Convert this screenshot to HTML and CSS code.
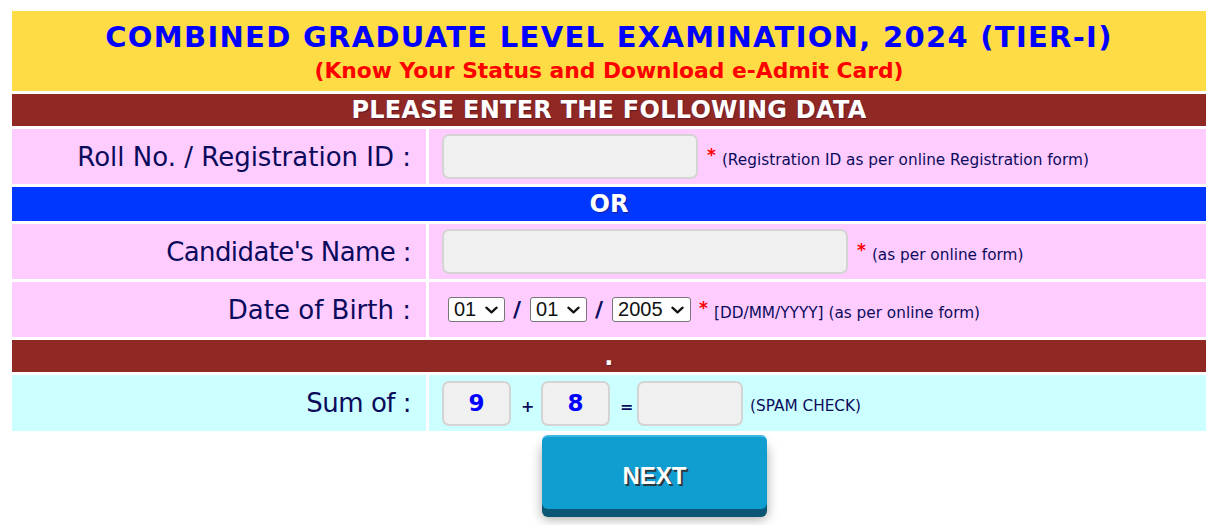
FILE: index.html
```html
<!DOCTYPE html>
<html lang="en">
<head>
<meta charset="utf-8">
<title>Combined Graduate Level Examination, 2024 (Tier-I)</title>
<link rel="stylesheet" href="styles.css">
</head>
<body>
<form class="sheet" onsubmit="return false">
  <div class="banner">
    <h1 class="title">COMBINED GRADUATE LEVEL EXAMINATION, 2024 (TIER-I)</h1>
    <p class="subtitle">(Know Your Status and Download e-Admit Card)</p>
  </div>
  <div class="bar bar-maroon">PLEASE ENTER THE FOLLOWING DATA</div>
  <div class="row">
    <div class="label cell-pink">Roll No. / Registration ID :</div>
    <div class="field cell-pink">
      <input class="text-input roll-input" type="text">
      <span class="req">*</span>
      <span class="note">(Registration ID as per online Registration form)</span>
    </div>
  </div>
  <div class="bar bar-blue">OR</div>
  <div class="row">
    <div class="label cell-pink label-tight">Candidate's Name :</div>
    <div class="field cell-pink">
      <input class="text-input name-input" type="text">
      <span class="req">*</span>
      <span class="note">(as per online form)</span>
    </div>
  </div>
  <div class="row">
    <div class="label cell-pink">Date of Birth :</div>
    <div class="field cell-pink dob">
      <span class="select-wrap sel-day">
        <select class="dob-select"><option>01</option></select>
        <svg class="chev" viewBox="0 0 14 8" aria-hidden="true"><path d="M1.5 1.5 L7 6.5 L12.5 1.5" fill="none" stroke="#111" stroke-width="2.4" stroke-linecap="round" stroke-linejoin="round"/></svg>
      </span>
      <span class="slash">/</span>
      <span class="select-wrap sel-month">
        <select class="dob-select"><option>01</option></select>
        <svg class="chev" viewBox="0 0 14 8" aria-hidden="true"><path d="M1.5 1.5 L7 6.5 L12.5 1.5" fill="none" stroke="#111" stroke-width="2.4" stroke-linecap="round" stroke-linejoin="round"/></svg>
      </span>
      <span class="slash">/</span>
      <span class="select-wrap sel-year">
        <select class="dob-select"><option>2005</option></select>
        <svg class="chev" viewBox="0 0 14 8" aria-hidden="true"><path d="M1.5 1.5 L7 6.5 L12.5 1.5" fill="none" stroke="#111" stroke-width="2.4" stroke-linecap="round" stroke-linejoin="round"/></svg>
      </span>
      <span class="req">*</span>
      <span class="note">[DD/MM/YYYY] (as per online form)</span>
    </div>
  </div>
  <div class="bar bar-maroon bar-dot">.</div>
  <div class="row row-cyan">
    <div class="label cell-cyan label-wide">Sum of :</div>
    <div class="field cell-cyan">
      <input class="text-input num-box" type="text" value="9" readonly>
      <span class="op op-plus">+</span>
      <input class="text-input num-box" type="text" value="8" readonly>
      <span class="op op-eq">=</span>
      <input class="text-input sum-box" type="text">
      <span class="note spam">(SPAM CHECK)</span>
    </div>
  </div>
  <div class="actions">
    <button class="next-btn" type="submit">NEXT</button>
  </div>
</form>
</body>
</html>
```
FILE: styles.css
```css
* { box-sizing: border-box; }
body {
  margin: 0;
  background: #ffffff;
  font-family: "DejaVu Sans", "Noto Sans", sans-serif;
  color: #0b0b5c;
}
.sheet {
  margin: 11px 10px 0 12px;
  display: flex;
  flex-direction: column;
  gap: 3px;
}
.banner {
  background: #fddc45;
  height: 80px;
  text-align: center;
  padding-top: 10px;
}
.title {
  margin: 0;
  font-size: 29px;
  line-height: 32px;
  font-weight: bold;
  letter-spacing: 1.3px;
  color: #0000ff;
}
.subtitle {
  margin: 4px 0 0;
  font-size: 21.8px;
  line-height: 28px;
  font-weight: bold;
  color: #ff0000;
}
.bar {
  height: 32px;
  display: flex;
  align-items: center;
  justify-content: center;
  color: #ffffff;
  font-weight: bold;
  font-size: 24px;
  letter-spacing: 0.25px;
  text-shadow: 1px 1px 1px rgba(40,0,60,0.45);
}
.bar-maroon { background: #902923; }
.bar-blue { background: #0037ff; height: 34px; letter-spacing: 0; }
.bar-dot { align-items: flex-end; padding-bottom: 3px; line-height: 1; }
.row {
  display: grid;
  grid-template-columns: 414px 1fr;
  column-gap: 3px;
  height: 55px;
}
.row-cyan { height: 56px; }
.cell-pink { background: #ffccff; }
.cell-cyan { background: #ccffff; }
.label {
  display: flex;
  align-items: center;
  justify-content: flex-end;
  padding-right: 15px;
  font-size: 26px;
  color: #0b0b5c;
}
.label-tight { letter-spacing: -0.6px; }
.label-wide { letter-spacing: -0.5px; }
.field {
  display: flex;
  align-items: center;
  padding-left: 13px;
}
.text-input {
  height: 45px;
  background: #f0f0f0;
  border: 2px solid #d4d4d4;
  border-radius: 7px;
  font-family: inherit;
  font-size: 22px;
  padding: 0 8px;
  outline: none;
}
.roll-input { width: 256px; }
.name-input { width: 406px; }
.num-box {
  width: 69px;
  text-align: center;
  color: #0000ff;
  font-weight: bold;
  font-size: 23px;
}
.sum-box { width: 106px; }
.req {
  color: #ff0000;
  font-weight: bold;
  font-size: 17px;
  margin-left: 9px;
  position: relative;
  top: -2px;
}
.note {
  font-size: 15.3px;
  margin-left: 6px;
  color: #0b0b5c;
  position: relative;
  top: 3px;
}
.op {
  display: inline-block;
  font-weight: bold;
  font-size: 16px;
  text-align: center;
  position: relative;
  top: 3px;
}
.op-plus { width: 10px; margin: 0 10px 0 10px; }
.op-eq { width: 9px; margin: 0 8px 0 10px; }
.spam { margin-left: 7px; }
.select-wrap {
  position: relative;
  display: inline-flex;
}
.dob-select {
  -webkit-appearance: none;
  appearance: none;
  font-family: "Liberation Sans", Arial, sans-serif;
  font-size: 20px;
  height: 25px;
  line-height: 23px;
  color: #111;
  background: #ffffff;
  border: 1px solid #767676;
  border-radius: 3px;
  padding: 0 0 0 5px;
  margin: 0;
}
.chev {
  position: absolute;
  right: 7px;
  top: 9px;
  width: 13px;
  height: 8px;
  pointer-events: none;
}
.sel-day { margin-left: 6px; }
.sel-day .dob-select, .sel-month .dob-select { width: 57px; }
.sel-year .dob-select { width: 79px; }
.slash {
  font-weight: bold;
  font-size: 22px;
  margin: 0 9px 0 8px;
}
.dob .req { margin-left: 8px; }
.dob .note { margin-left: 6px; }
.actions {
  padding-left: 530px;
  padding-top: 1px;
  padding-bottom: 16px;
}
.next-btn {
  width: 225px;
  height: 74px;
  background: #109dd0;
  border: none;
  border-top: 2px solid #3cb7e3;
  border-radius: 6px;
  color: #ffffff;
  font-family: "Liberation Sans", Arial, sans-serif;
  font-weight: bold;
  font-size: 24px;
  padding: 6px 0 0;
  text-shadow: 2px 2px 0 #2b3a40;
  box-shadow: 0 8px 0 #0b5674, 0 10px 12px rgba(0,0,0,0.35);
  cursor: pointer;
}
```
